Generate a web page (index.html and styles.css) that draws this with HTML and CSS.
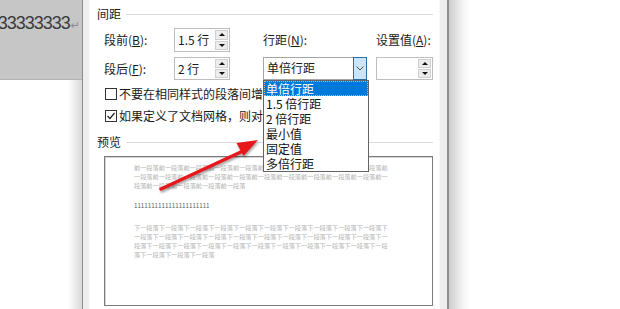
FILE: index.html
```html
<!DOCTYPE html>
<html lang="zh-CN">
<head>
  <meta charset="UTF-8">
  <title>段落 - 间距</title>
  <link rel="stylesheet" href="styles.css">
</head>
<body>
  <div class="screen">
    <div class="doc">
      <div class="doc-sel">
        <span class="doc-text">3333333333333<span class="para-mark">↵</span></span>
      </div>
    </div>
    <div class="edge-l"></div>
    <div class="dlg">
      <div class="dlg-body">
        <div class="group-title"><span>间距</span><i class="rule"></i></div>

        <div class="spacing">
          <label class="lbl c1">段前(<u>B</u>):</label>
          <div class="spin c2">
            <span class="val">1.5 行</span>
            <div class="spin-btns"><span class="up"></span><span class="down"></span></div>
          </div>
          <label class="lbl c3">行距(<u>N</u>):</label>
          <label class="lbl c4">设置值(<u>A</u>):</label>

          <label class="lbl c1">段后(<u>F</u>):</label>
          <div class="spin c2">
            <span class="val">2 行</span>
            <div class="spin-btns"><span class="up"></span><span class="down"></span></div>
          </div>
          <div class="combo c3">
            <span class="val">单倍行距</span>
            <span class="combo-btn">
              <svg width="8" height="5" viewBox="0 0 8 5"><polyline points="0.5,0.5 4,4 7.5,0.5" fill="none" stroke="#555" stroke-width="1"/></svg>
            </span>
            <ul class="droplist">
              <li class="selected">单倍行距</li>
              <li>1.5 倍行距</li>
              <li>2 倍行距</li>
              <li>最小值</li>
              <li>固定值</li>
              <li>多倍行距</li>
            </ul>
          </div>
          <div class="spin c4">
            <span class="val"></span>
            <div class="spin-btns"><span class="up"></span><span class="down"></span></div>
          </div>
        </div>

        <div class="check-row">
          <span class="checkbox"></span>
          <span class="check-text">不要在相同样式的段落间增加间距(<u>C</u>)</span>
        </div>
        <div class="check-row">
          <span class="checkbox checked">
            <svg width="10" height="10" viewBox="0 0 10 10"><polyline points="1.5,5 4,7.5 8.5,2" fill="none" stroke="#222" stroke-width="1.2"/></svg>
          </span>
          <span class="check-text">如果定义了文档网格，则对齐到网格(<u>W</u>)</span>
        </div>

        <div class="group-title preview-title"><span>预览</span><i class="rule"></i></div>

        <div class="preview">
          <div class="pv-text pv-prev">前一段落前一段落前一段落前一段落前一段落前一段落前一段落前一段落前一段落前一段落前一段落前一段落前一段落前一段落前一段落前一段落前一段落前一段落前一段落前一段落前一段落前一段落前一段落前一段落前一段落</div>
          <div class="pv-text pv-cur">1111111111111111111111</div>
          <div class="pv-text pv-next">下一段落下一段落下一段落下一段落下一段落下一段落下一段落下一段落下一段落下一段落下一段落下一段落下一段落下一段落下一段落下一段落下一段落下一段落下一段落下一段落下一段落下一段落下一段落下一段落下一段落下一段落下一段落下一段落下一段落下一段落下一段落下一段落下一段落下一段落</div>
        </div>
      </div>
    </div>
    <div class="edge-r"></div>
    <div class="backdrop"></div>

    <svg class="annot" width="620" height="309" viewBox="0 0 620 309">
      <g class="red-arrow">
        <line x1="161" y1="189" x2="243" y2="151" stroke="#e8171b" stroke-width="3.5" stroke-linecap="round"/>
        <polygon points="258,140 236.5,143 243.5,156" fill="#e8171b"/>
      </g>
    </svg>
  </div>
</body>
</html>
```

FILE: styles.css
```css
body {
  margin: 0;
  background: #fff;
  font-family: "Noto Sans CJK SC", "Noto Sans", sans-serif;
  font-size: 12px;
  color: #1a1a1a;
}
.screen {
  position: relative;
  display: flex;
  width: 620px;
  height: 309px;
  overflow: hidden;
}

/* word document behind the dialog */
.doc {
  width: 82px;
  flex: none;
  background: linear-gradient(to right, #fff 0, #fff 68px, #d9d9d9 82px);
}
.doc-sel {
  height: 80px;
  box-sizing: border-box;
  background: #c6c6c6;
  border-bottom: 1px solid #b3b3b3;
  display: flex;
  justify-content: flex-end;
  overflow: hidden;
  white-space: nowrap;
  padding-right: 2px;
}
.doc-text {
  font-family: "Liberation Sans", Arial, sans-serif;
  font-size: 18px;
  line-height: 20px;
  margin-top: 13px;
  color: #3a3a3a;
  letter-spacing: -1px;
}
.para-mark {
  font-family: "DejaVu Sans", sans-serif;
  font-size: 11px;
  color: #8a8a8a;
  letter-spacing: 0;
  margin-left: 1px;
}

/* dialog frame */
.edge-l {
  width: 1px;
  flex: none;
  background: #8e8e8e;
}
.dlg {
  width: 364px;
  flex: none;
  box-sizing: border-box;
  padding: 0 8px 0 7px;
  background: #eeeeee;
}
.edge-r {
  width: 2px;
  flex: none;
  background: #8e8e8e;
}
.backdrop {
  flex: 1;
  background: linear-gradient(to right, #cdcdcd 0, #f4f4f4 14px, #fff 22px);
}
.dlg-body {
  position: relative;
  height: 100%;
  box-sizing: border-box;
  padding: 6px 0 0 7px;
  background: #fff;
  box-shadow: -1px 0 0 #f8f8f8, 1px 0 0 #f8f8f8;
}

.group-title {
  display: flex;
  align-items: center;
  gap: 5px;
  height: 16px;
  line-height: 16px;
  margin-right: 6px;
}
.group-title .rule {
  flex: 1;
  height: 1px;
  background: #dcdcdc;
}
.preview-title {
  margin-top: 10px;
}

/* spacing fields */
.spacing {
  display: grid;
  grid-template-columns: 70px 56px 33px 104px 9px 57px;
  grid-template-rows: 24px 23px;
  row-gap: 5px;
  margin: 6px 0 0 7px;
}
.c1 { grid-column: 1; }
.c2 { grid-column: 2; }
.c3 { grid-column: 4; }
.c4 { grid-column: 6; }
.lbl {
  align-self: center;
  line-height: 16px;
  white-space: nowrap;
}
.spin,
.combo {
  display: flex;
  box-sizing: border-box;
  border: 1px solid #bdbdbd;
  background: #fff;
}
.val {
  flex: 1;
  padding-left: 3px;
  line-height: 21px;
  white-space: nowrap;
}
.spin-btns {
  width: 13px;
  display: flex;
  flex-direction: column;
  gap: 1px;
  padding: 1px 1px 1px 0;
}
.spin-btns span {
  flex: 1;
  display: flex;
  align-items: center;
  justify-content: center;
  background: #ececec;
  border: 1px solid #d0d0d0;
}
.spin-btns .up::after {
  content: "";
  border-left: 3px solid transparent;
  border-right: 3px solid transparent;
  border-bottom: 3px solid #111;
}
.spin-btns .down::after {
  content: "";
  border-left: 3px solid transparent;
  border-right: 3px solid transparent;
  border-top: 3px solid #111;
}

.combo {
  position: relative;
  border-color: #a6a6a6;
}
.combo .val {
  line-height: 20px;
}
.combo-btn {
  width: 14px;
  box-sizing: border-box;
  margin: -1px -1px -1px 0;
  display: flex;
  align-items: center;
  justify-content: center;
  background: #cce4f7;
  border: 1px solid #2f6ea5;
}

.droplist {
  position: absolute;
  left: -1px;
  top: 22px;
  width: 106px;
  box-sizing: border-box;
  margin: 0;
  padding: 0;
  list-style: none;
  background: #fff;
  border: 1px solid #646464;
  z-index: 2;
}
.droplist li {
  height: 15px;
  line-height: 15px;
  padding-left: 2px;
  color: #111;
  white-space: nowrap;
}
.droplist li.selected {
  background: #0078d7;
  color: #fff;
  outline: 1px dotted #d8b98c;
  outline-offset: -1px;
}

/* checkboxes; their labels run on under the open list */
.check-row {
  display: flex;
  align-items: center;
  gap: 2px;
  width: 158px;
  height: 16px;
  line-height: 16px;
  margin: 6px 0 0 8px;
  white-space: nowrap;
  overflow: hidden;
}
.check-text {
  overflow: hidden;
}
.checkbox {
  width: 12px;
  height: 12px;
  box-sizing: border-box;
  border: 1px solid #333;
  background: #fff;
  display: flex;
  align-items: center;
  justify-content: center;
  flex: none;
}

/* preview box */
.preview {
  width: 329px;
  height: 150px;
  box-sizing: border-box;
  margin: 6px 0 0 7px;
  padding: 6px 0 0 29px;
  border: 1px solid #7c7c7c;
  box-shadow: inset 1px 1px 0 #d4d4d4;
  background: #fff;
}
.pv-text {
  width: 256px;
  font-size: 6.2px;
  line-height: 9px;
  word-break: break-all;
  color: #b4b4b4;
}
.pv-cur {
  margin-top: 11px;
  color: #5e5e5e;
}
.pv-next {
  margin-top: 13px;
}

/* annotation arrow drawn over the screenshot */
.annot {
  position: absolute;
  left: 0;
  top: 0;
  pointer-events: none;
}
.red-arrow {
  filter: drop-shadow(1px 2px 1px rgba(0, 0, 0, 0.35));
}
```
